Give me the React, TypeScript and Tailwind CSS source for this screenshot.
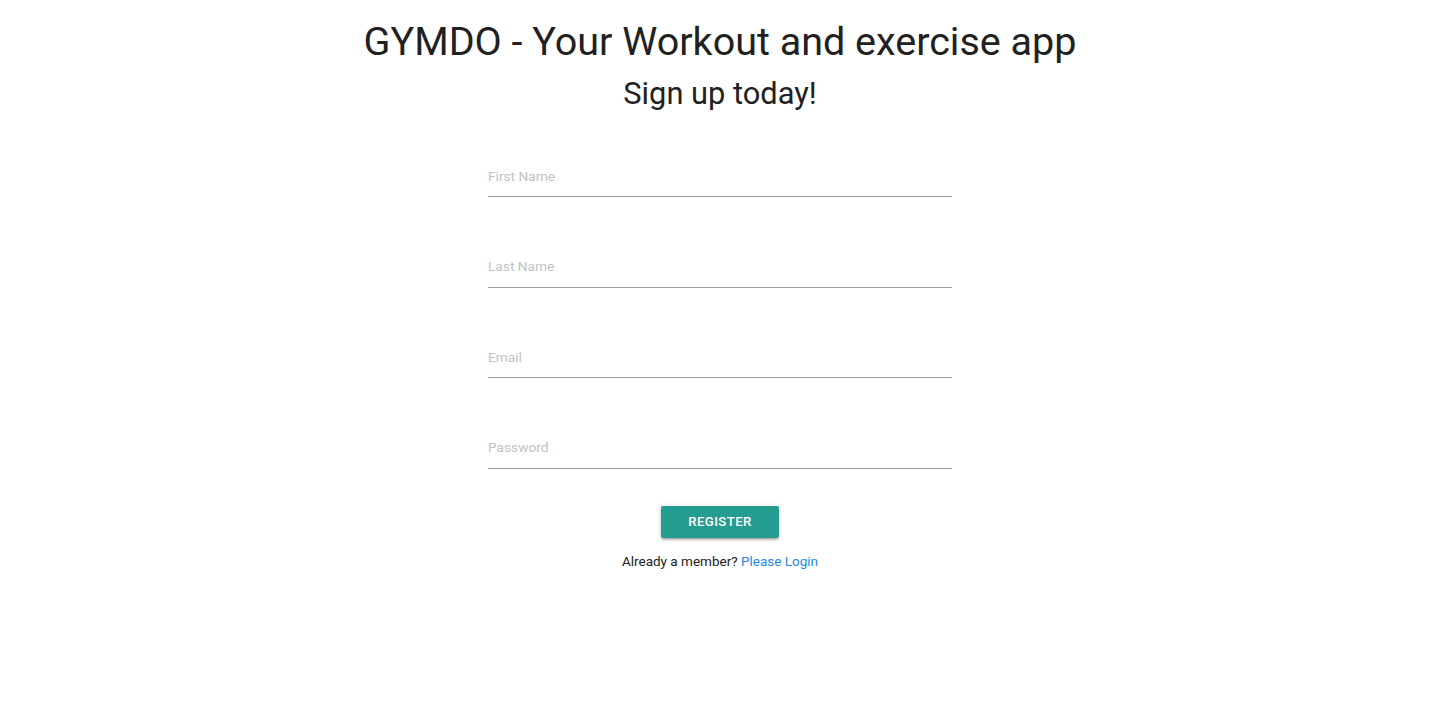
export default function App() {
  const fields = ["First Name", "Last Name", "Email", "Password"];

  return (
    <div className="min-h-screen bg-white text-[#212121] font-['Roboto',sans-serif]">
      <div className="flex flex-col items-center pt-[19px]">
        {/* Headings */}
        <h1 className="text-[39.5px] leading-[46px] font-normal">
          GYMDO - Your Workout and exercise app
        </h1>
        <h2 className="mt-[9px] text-[30.8px] leading-[40px] font-normal">
          Sign up today!
        </h2>

        {/* Form */}
        <form className="w-[464px] mt-[29px] flex flex-col">
          {fields.map((f) => (
            <div key={f} className="pt-[8px] pb-[36.67px]">
              <input
                type={f === "Password" ? "password" : f === "Email" ? "email" : "text"}
                placeholder={f}
                className="w-full h-[46px] pt-[4px] border-b border-[#9e9e9e] bg-transparent text-[13.7px] outline-none placeholder:text-[#c2c2c2]"
              />
            </div>
          ))}

          <div className="flex flex-col items-center">
            <button
              type="button"
              className="w-[118px] h-[32px] rounded-[2px] bg-[#249c8f] text-white text-[13.2px] font-medium tracking-[0.4px] uppercase shadow-[0_2px_2px_0_rgba(0,0,0,0.14),0_3px_1px_-2px_rgba(0,0,0,0.12),0_1px_5px_0_rgba(0,0,0,0.2)]"
            >
              Register
            </button>
            <p className="mt-[13px] text-[13.5px] leading-[20px]">
              Already a member? <a href="#" className="text-[#1e88e5]">Please Login</a>
            </p>
          </div>
        </form>
      </div>
    </div>
  );
}
